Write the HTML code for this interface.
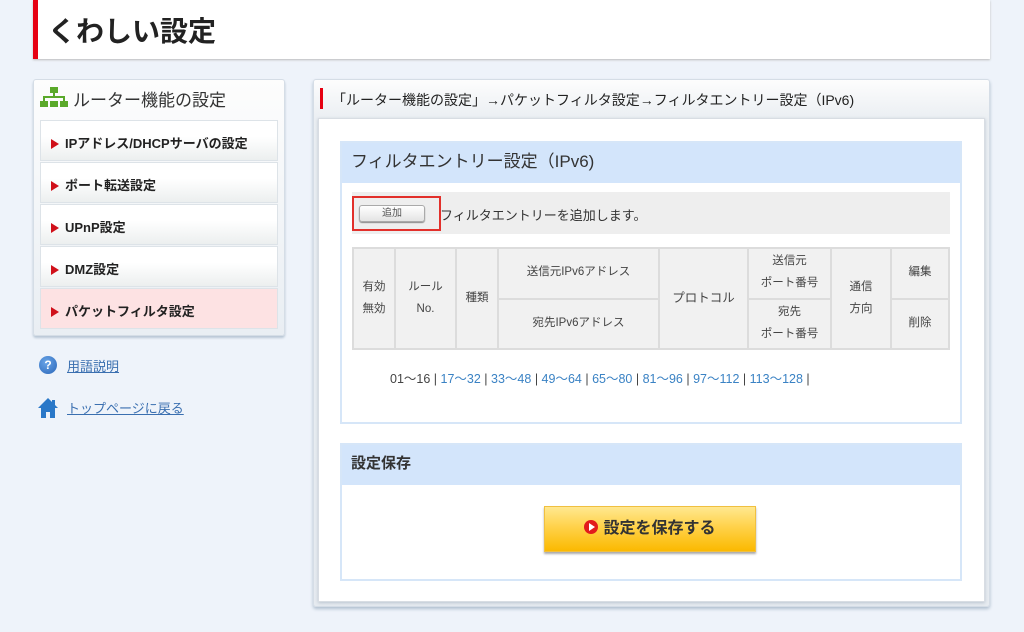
<!DOCTYPE html>
<html><head><meta charset="utf-8"><style>
*{margin:0;padding:0;box-sizing:border-box}
body{width:1024px;height:632px;background:#eef3fa;font-family:"Liberation Sans","Noto Sans CJK JP",sans-serif;position:relative;overflow:hidden;color:#222}
.a{position:absolute}
.hdr{left:33px;top:0;width:957px;height:59px;background:#fff;border-left:5px solid #e60012;box-shadow:0 1px 2px #bbb}
.hdr h1{position:absolute;left:10px;top:10px;font-size:28px;font-weight:bold;color:#222}
.side{left:33px;top:79px;width:252px;height:257px;background:linear-gradient(#fdfdfd,#e9eef3);border:1px solid #d5dde6;border-radius:3px;box-shadow:0 2px 2px #b8c6d4}
.mi{left:40px;width:238px;height:41px;background:linear-gradient(#fff 40%,#ecefef);border:1px solid #dde3e8;font-size:13px;font-weight:bold;padding:12px 0 0 10px;color:#222}
.mi:before{content:"";display:inline-block;border-left:8px solid #d0101a;border-top:5px solid transparent;border-bottom:5px solid transparent;margin-right:6px;vertical-align:-1px}
.lk{font-size:13px;color:#3a6fb0;text-decoration:underline;left:67px}
.main{left:313px;top:79px;width:677px;height:528px;background:linear-gradient(#fdfdfd,#eaeef2 40px,#e6ebf0);border:1px solid #d5dde6;border-radius:3px;box-shadow:0 2px 3px #b0bfcf}
.inner{left:318px;top:118px;width:667px;height:484px;background:#fff;border:1px solid #d8dde3;box-shadow:0 1px 3px #bbc5d0}
.sec{left:340px;width:622px;border:2px solid #d6e6f8;background:#fff}
.sh{height:40px;background:#d3e5fb;padding:0 0 0 9px;line-height:38px}
table{border-collapse:collapse;position:absolute;left:352px;top:247px;width:598px;height:103px;font-size:11.5px;color:#444;text-align:center}
td{border:2px solid #dcdcdc;background:#f1f1f1;line-height:1.9}
.pg{left:390px;top:368px;font-size:12.5px;color:#444;white-space:nowrap}
.pg span{color:#3a82c4}
</style></head><body>
<div class="a hdr"><h1>くわしい設定</h1></div>
<div class="a side"></div>
<svg class="a" style="left:39px;top:86px" width="30" height="24" viewBox="0 0 30 24"><rect x="11" y="1" width="8" height="6" fill="#5aa92a"/><rect x="14" y="7" width="2" height="4" fill="#5aa92a"/><rect x="4" y="10" width="22" height="2" fill="#5aa92a"/><rect x="4" y="10" width="2" height="6" fill="#5aa92a"/><rect x="24" y="10" width="2" height="6" fill="#5aa92a"/><rect x="1" y="15" width="8" height="6" fill="#5aa92a"/><rect x="11" y="15" width="8" height="6" fill="#5aa92a"/><rect x="21" y="15" width="8" height="6" fill="#5aa92a"/></svg>
<div class="a" style="left:73px;top:86px;font-size:17px;color:#333">ルーター機能の設定</div>
<div class="a mi" style="top:120px">IPアドレス/DHCPサーバの設定</div>
<div class="a mi" style="top:162px">ポート転送設定</div>
<div class="a mi" style="top:204px">UPnP設定</div>
<div class="a mi" style="top:246px">DMZ設定</div>
<div class="a mi" style="top:288px;background:#fde2e3">パケットフィルタ設定</div>
<div class="a" style="left:39px;top:356px;width:18px;height:18px;border-radius:50%;background:radial-gradient(circle at 40% 35%,#6aa5e8,#2a66b8);color:#fff;font-size:12px;font-weight:bold;text-align:center;line-height:18px">?</div>
<div class="a lk" style="top:356px">用語説明</div>
<svg class="a" style="left:37px;top:397px" width="22" height="22" viewBox="0 0 22 22"><path d="M11 1 L1 11 L4 11 L4 21 L9 21 L9 15 L13 15 L13 21 L18 21 L18 11 L21 11 Z" fill="#2a78c8"/><rect x="15" y="3" width="3" height="5" fill="#2a78c8"/></svg>
<div class="a lk" style="top:398px">トップページに戻る</div>
<div class="a main"></div>
<div class="a" style="left:320px;top:88px;width:3px;height:21px;background:#e60012"></div>
<div class="a" style="left:332px;top:90px;font-size:14px;color:#222">「ルーター機能の設定」→パケットフィルタ設定→フィルタエントリー設定（IPv6)</div>
<div class="a inner"></div>
<div class="a sec" style="top:141px;height:283px"><div class="sh" style="font-size:17px;color:#333">フィルタエントリー設定（IPv6)</div></div>
<div class="a" style="left:352px;top:192px;width:598px;height:42px;background:#eee"></div>
<div class="a" style="left:352px;top:196px;width:89px;height:35px;border:2px solid #e2302b"></div>
<div class="a" style="left:359px;top:205px;width:66px;height:17px;background:linear-gradient(#fff,#e4e4e4);border:1px solid #aaa;border-radius:3px;font-size:10px;color:#555;text-align:center;line-height:15px;box-shadow:0 1px 1px #888">追加</div>
<div class="a" style="left:440px;top:205px;font-size:13px;color:#333">フィルタエントリーを追加します。</div>
<table>
<tr><td rowspan="2" style="width:42px">有効<br>無効</td><td rowspan="2" style="width:61px">ルール<br>No.</td><td rowspan="2" style="width:42px">種類</td><td style="width:161px">送信元IPv6アドレス</td><td rowspan="2" style="width:89px;font-size:12.5px">プロトコル</td><td style="width:83px">送信元<br>ポート番号</td><td rowspan="2" style="width:60px">通信<br>方向</td><td>編集</td></tr>
<tr><td>宛先IPv6アドレス</td><td>宛先<br>ポート番号</td><td>削除</td></tr>
</table>
<div class="a pg">01〜16 | <span>17〜32</span> | <span>33〜48</span> | <span>49〜64</span> | <span>65〜80</span> | <span>81〜96</span> | <span>97〜112</span> | <span>113〜128</span> |</div>
<div class="a sec" style="top:443px;height:138px"><div class="sh" style="font-size:15px;font-weight:bold;color:#333">設定保存</div></div>
<div class="a" style="left:544px;top:506px;width:212px;height:46px;background:linear-gradient(#ffe890,#ffd24a 45%,#fbb900);border:1px solid #f0c040;box-shadow:0 2px 2px #aaa;text-align:center;line-height:44px;font-size:16px;font-weight:bold;color:#333"><span style="display:inline-block;width:14px;height:14px;border-radius:50%;background:#e21c1c;vertical-align:-1px;margin-right:5px;position:relative"><span style="position:absolute;left:5px;top:3px;border-left:6px solid #fff;border-top:4px solid transparent;border-bottom:4px solid transparent"></span></span>設定を保存する</div>
</body></html>
